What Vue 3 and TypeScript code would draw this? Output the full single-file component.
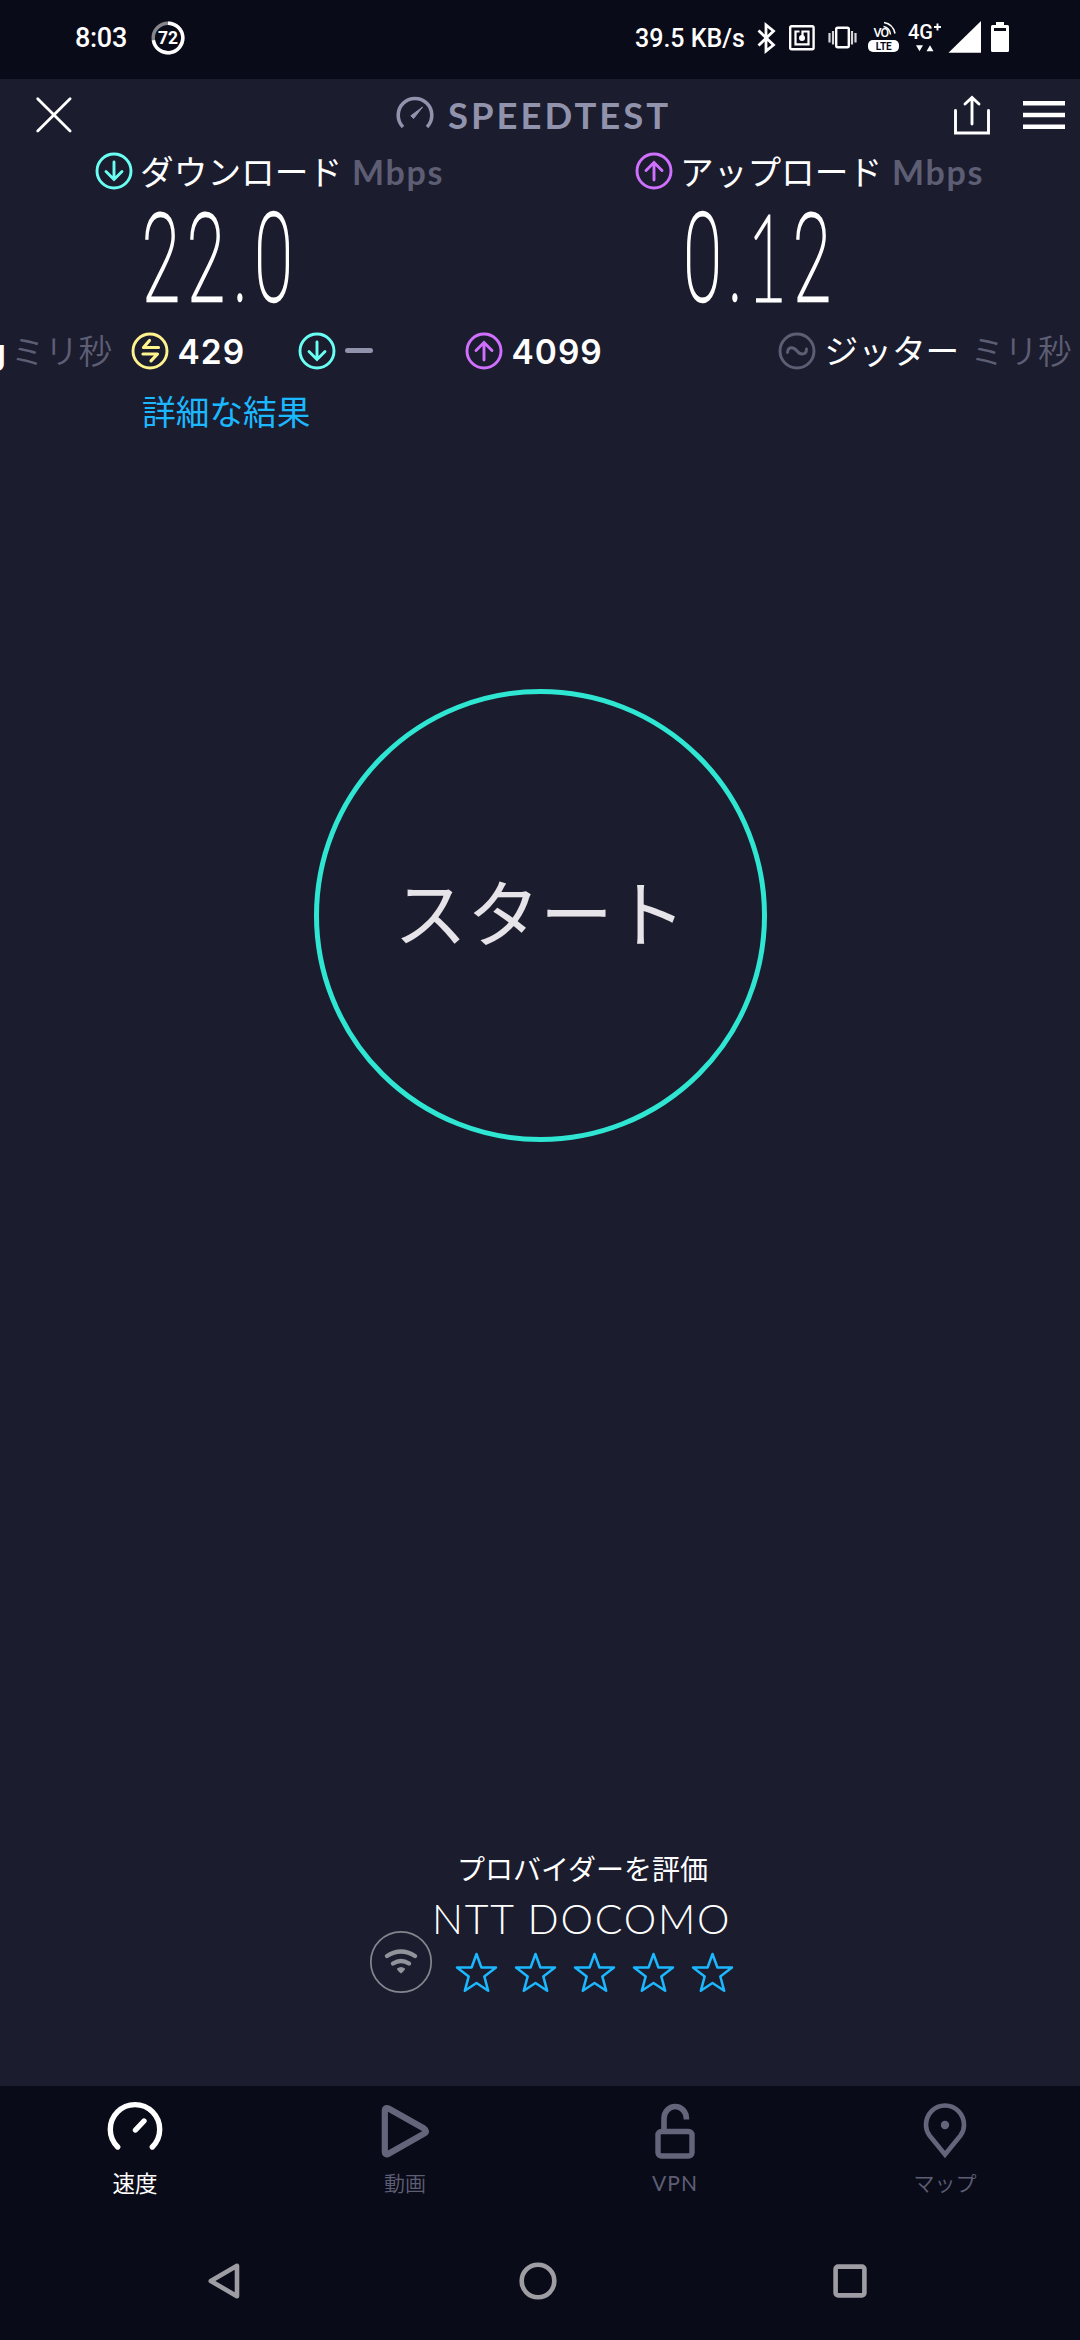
<script setup lang="ts">
interface Reading {
  key: string
  label: string
  glyphs: { char: string; x: number }[]
  arrow: string
}

const DOWN = 'M19 10v17M11 19.5l8 8 8-8'
const UP = 'M19 28V11M11 18.5l8-8 8 8'

const readings: Reading[] = [
  {
    key: 'download',
    label: 'ダウンロード',
    glyphs: [{ char: '2', x: 17 }, { char: '2', x: 62 }, { char: '.', x: 96.5 }, { char: '0', x: 129.5 }],
    arrow: DOWN,
  },
  {
    key: 'upload',
    label: 'アップロード',
    glyphs: [{ char: '0', x: 18.5 }, { char: '.', x: 51.5 }, { char: '1', x: 83 }, { char: '2', x: 128 }],
    arrow: UP,
  },
]

const stars = [1, 2, 3, 4, 5]
</script>

<template>
  <div class="screen">
    <header class="status">
      <span class="clock">8:03</span>
      <svg class="badge" width="34" height="34" viewBox="0 0 34 34">
        <circle cx="17" cy="17" r="14.8" fill="none" stroke="#85858c" stroke-width="3.4" />
        <path d="M17 2.2A14.8 14.8 0 1 1 2.4 19.2" fill="none" stroke="#fff" stroke-width="3.4" />
        <text x="17" y="23" text-anchor="middle" class="badge-text">72</text>
      </svg>
      <span class="rate">39.5 KB/s</span>
      <svg class="tray" width="256" height="40" viewBox="756 18 256 40" fill="none" stroke="#fff">
        <path d="M758.5 30.5l15 14.5-7.5 6V25l7.5 6-15 14.5" stroke-width="2.8" />
        <g stroke-width="2.4">
          <rect x="790.2" y="26.2" width="23.4" height="23" rx="1.5" />
          <path d="M799.5 31.5h-4v12.800h13V31.500h-6v6" stroke-width="2.200" />
          <circle cx="802" cy="38" r="1.800" fill="#fff" />
        </g>
        <rect x="836.200" y="27.800" width="12.600" height="19.500" rx="1.500" stroke-width="2.400" />
        <path d="M829.500 33v9.500M833 31v13.500M852 31v13.500M855.500 33v9.500" stroke="#d5d5da" stroke-width="2.200" />
        <g stroke="none" fill="#fff">
          <rect x="868" y="40" width="31" height="12" rx="5" />
          <text x="883.700" y="49.700" text-anchor="middle" class="lte">LTE</text>
          <text x="873.500" y="37" class="vo">VO</text>
          <text x="908" y="39" class="net">4G</text>
          <path d="M916 45.200h7l-3.500 6zM926.500 51.200h7l-3.500-6z" />
          <path d="M981 21v31.700h-32.500z" />
          <path d="M996 22h8v3h3.500q1.500 0 1.500 1.500V50.500q0 1.500-1.500 1.500h-15q-1.500 0-1.500-1.500V26.500q0-1.500 1.500-1.500h3.500z" />
        </g>
        <path d="M994 29.500h12" stroke="#0a0b18" stroke-width="3" />
        <path d="M937.500 23.500v7M934 27h7" stroke-width="1.900" />
        <path d="M883.500 26.500q6 1 7 8M884 22.500q9 1.500 11 11" stroke-width="1.600" />
      </svg>
    </header>

    <main class="body">
      <div class="topbar">
        <svg class="close" width="38" height="38" viewBox="0 0 38 38" stroke="#fff" stroke-width="2.800" stroke-linecap="round">
          <path d="M2.700 2.700l32.400 32.400M35.100 2.700L2.700 35.100" />
        </svg>
        <svg class="logo" width="40" height="34" viewBox="0 0 40 34">
          <path d="M8 31A16.800 16.800 0 1 1 32 31" fill="none" stroke="#9192ab" stroke-width="3.600" />
          <path d="M27.600 11L18.600 22.500L15.800 19.800z" fill="#9192ab" stroke="#9192ab" stroke-width="1" />
        </svg>
        <h1 class="brand">SPEEDTEST</h1>
        <svg class="share" width="38" height="40" viewBox="0 0 38 40" fill="none" stroke="#fff" stroke-width="2.900" stroke-linecap="round">
          <path d="M2.500 15.500V38h33V15.500" />
          <path d="M19 29V3M12 9l7-6.500L26 9" />
        </svg>
        <svg class="menu" width="42" height="30" viewBox="0 0 42 30" stroke="#fff" stroke-width="4.400">
          <path d="M0 3.300h42M0 15h42M0 26.700h42" />
        </svg>
      </div>

      <section class="readings">
        <div v-for="r in readings" :key="r.key" class="reading">
          <div class="reading-head">
            <svg class="ring" :class="r.key" width="38" height="38" viewBox="0 0 38 38">
              <circle cx="19" cy="19" r="17" />
              <path :d="r.arrow" />
            </svg>
            <span class="reading-label">{{ r.label }}</span>
            <span class="unit">Mbps</span>
          </div>
          <svg class="digits" width="160" height="102" viewBox="0 0 160 102">
            <g transform="scale(0.57 1)">
              <text
                v-for="(g, i) in r.glyphs"
                :key="i"
                :x="g.x / 0.57"
                y="95"
                text-anchor="middle"
                :class="{ one: g.char === '1' }"
              >{{ g.char }}</text>
            </g>
          </svg>
        </div>
      </section>

      <section class="latency">
        <span class="ping-name">Ping</span>
        <span class="ms">ミリ秒</span>
        <svg class="ring idle" width="38" height="38" viewBox="0 0 38 38">
          <circle cx="19" cy="19" r="17" />
          <path d="M18.500 8.500L12.500 15.500H27.500M12 22H26.500L20 28.800" stroke-width="3.200" stroke-linejoin="round" />
        </svg>
        <b class="value v1">429</b>
        <svg class="ring download" width="38" height="38" viewBox="0 0 38 38">
          <circle cx="19" cy="19" r="17" />
          <path :d="DOWN" />
        </svg>
        <i class="dash"></i>
        <svg class="ring upload" width="38" height="38" viewBox="0 0 38 38">
          <circle cx="19" cy="19" r="17" />
          <path :d="UP" />
        </svg>
        <b class="value v2">4099</b>
        <svg class="ring jitter" width="38" height="38" viewBox="0 0 38 38">
          <circle cx="19" cy="19" r="17" />
          <path d="M9.500 20.500C10 14.500 15.500 14.500 19 19S28.500 23 28.500 17" />
        </svg>
        <span class="jitter-label">ジッター</span>
        <span class="ms">ミリ秒</span>
      </section>

      <a class="details">詳細な結果</a>

      <button class="go">スタート</button>

      <section class="provider">
        <p class="rate-title">プロバイダーを評価</p>
        <p class="isp">NTT DOCOMO</p>
        <div class="rating">
          <svg class="wifi" width="64" height="64" viewBox="0 0 64 64">
            <circle cx="32" cy="32" r="30.200" fill="none" stroke="#85858f" stroke-width="1.700" />
            <path d="M18 26Q32 17 46 26M24 33.500Q32 28.500 40 33.500" fill="none" stroke="#92929b" stroke-width="4.400" stroke-linecap="round" />
            <path d="M28 38.500Q32 35.500 36 38.500Q36.300 40 32 43.500Q27.700 40 28 38.500z" fill="#92929b" />
          </svg>
          <div class="stars">
            <svg v-for="s in stars" :key="s" width="43" height="41" viewBox="0 0 43 41">
              <path d="M21.500 2L26.400 15.500H41L29.300 24.400L33.200 38.800L21.500 31L9.800 38.800L13.700 24.400L2 15.500H16.600z" />
            </svg>
          </div>
        </div>
      </section>
    </main>

    <nav class="tabs">
      <div class="tab active">
        <svg width="60" height="60" viewBox="0 0 60 60">
          <path d="M12.700 48A24.700 24.700 0 1 1 47.300 48M30.500 31L39 22" stroke-width="5.400" />
        </svg>
        <span>速度</span>
      </div>
      <div class="tab">
        <svg width="60" height="60" viewBox="0 0 60 60">
          <path d="M9.800 12Q9.800 7.500 14 9.700L49 29.500Q53 32.200 49 34.700L14 54.500Q9.800 56.800 9.800 52.300z" stroke-width="6.200" />
        </svg>
        <span>動画</span>
      </div>
      <div class="tab">
        <svg width="60" height="60" viewBox="0 0 60 60">
          <rect x="13" y="32.500" width="34" height="24.500" rx="3.500" stroke-width="5.400" />
          <path d="M19 32V19.500A11.200 12 0 0 1 41.400 19.500V20.500" stroke-width="5.600" stroke-linecap="butt" />
        </svg>
        <span class="latin">VPN</span>
      </div>
      <div class="tab">
        <svg width="60" height="60" viewBox="0 0 60 60">
          <path d="M30 55.500L14.500 36.500C11 32 11 29 11 26A19 19.500 0 0 1 49 26C49 29 49 32 45.500 36.500z" stroke-width="4.600" stroke-linejoin="miter" />
          <circle cx="30" cy="26" r="4.200" class="dot" />
        </svg>
        <span>マップ</span>
      </div>
    </nav>

    <footer class="system">
      <svg class="back" width="32" height="36" viewBox="0 0 32 36"><path d="M29 2.800V33.200L2.800 18z" /></svg>
      <svg class="home" width="38" height="38" viewBox="0 0 38 38"><circle cx="19" cy="19" r="16.300" /></svg>
      <svg class="recent" width="34" height="34" viewBox="0 0 34 34"><rect x="2.600" y="2.600" width="28.800" height="28.800" rx="2.500" /></svg>
    </footer>
  </div>
</template>

<style>
body {
  background: #1b1c2e;
}
</style>

<style scoped>
.screen {
  width: 1080px;
  height: 2340px;
  display: flex;
  flex-direction: column;
  overflow: hidden;
  background: #1b1c2e;
  color: #fff;
  font-family: Lato, "Noto Sans CJK JP", sans-serif;
}
svg {
  display: block;
  flex: none;
}
span, b, p, h1 {
  white-space: nowrap;
}
.status {
  height: 79px;
  flex: none;
  display: flex;
  align-items: center;
  box-sizing: border-box;
  padding-bottom: 3px;
  background: #0a0b18;
  font-family: Roboto, sans-serif;
  font-weight: 500;
}
.clock {
  margin-left: 75px;
  width: 76px;
  font-size: 27px;
  line-height: 34px;
  letter-spacing: -0.3px;
}
.rate {
  margin-left: 450px;
  width: 121px;
  font-size: 25px;
}
.badge-text {
  font: 700 17.5px Roboto, sans-serif;
  fill: #fff;
}
.lte {
  font: 700 10px Roboto, sans-serif;
  fill: #0a0b18;
}
.vo {
  font: 500 12.5px Roboto, sans-serif;
  letter-spacing: -1px;
}
.net {
  font: 500 20px Roboto, sans-serif;
}
.body {
  height: 2007px;
  flex: none;
}
.topbar {
  height: 72px;
  display: flex;
  align-items: center;
}
.close {
  margin-left: 35px;
}
.logo {
  margin-left: 322px;
  margin-bottom: 4px;
}
.brand {
  margin: 0 0 0 13px;
  width: 503px;
  font-size: 36.5px;
  font-weight: 700;
  line-height: 44px;
  letter-spacing: 3px;
  color: #9192ab;
}
.share {
  margin-left: 2px;
}
.menu {
  margin-left: 32px;
}
.readings {
  height: 162px;
  display: flex;
}
.reading {
  width: 540px;
}
.reading-head {
  height: 39px;
  display: flex;
  align-items: center;
  padding-left: 95px;
}
.ring {
  fill: none;
  stroke-width: 2.9;
  stroke-linecap: round;
}
.download {
  stroke: #6afff3;
}
.upload {
  stroke: #d070ff;
}
.idle {
  stroke: #fff38e;
}
.jitter {
  stroke: #5d5e74;
  margin-left: 174px;
}
.reading-label, .jitter-label, .ms, .details {
  font-family: "Noto Sans CJK JP", sans-serif;
  font-size: 33.7px;
  line-height: 40px;
}
.reading-label {
  margin: 1px 0 0 7px;
  width: 212px;
}
.unit {
  margin-top: 3px;
  font-size: 34px;
  line-height: 40px;
  font-weight: 700;
  letter-spacing: 1.7px;
  color: #5d5e74;
}
.digits {
  margin: 16px 0 0 144px;
  overflow: visible;
}
.digits text {
  font-family: Roboto, sans-serif;
  font-weight: 100;
  font-size: 122px;
  fill: #fff;
  stroke: #fff;
  stroke-width: 2px;
  vector-effect: non-scaling-stroke;
}
.digits .one {
  font-family: Lato, sans-serif;
  font-size: 120px;
  stroke-width: 2.6px;
}
.latency {
  height: 76px;
  display: flex;
  align-items: center;
}
.latency > * {
  flex: none;
}
.ping-name {
  width: 6px;
  display: flex;
  justify-content: flex-end;
  font-family: Inter, sans-serif;
  font-size: 34px;
  font-weight: 600;
}
.ms {
  margin: 0 0 2px 5px;
  width: 119.5px;
  font-weight: 350;
  color: #5d5e74;
}
.value {
  font-family: Inter, sans-serif;
  font-size: 33.5px;
  line-height: 40px;
  font-weight: 600;
  letter-spacing: 1px;
}
.v1 {
  margin: 1px 0 0 9px;
  width: 120px;
}
.dash {
  width: 28px;
  height: 5px;
  margin: 0 92px 2px 9px;
  border-radius: 2.5px;
  background: #9192ab;
}
.v2 {
  margin: 1px 0 0 9px;
  width: 92px;
}
.jitter-label {
  margin: 0 0 2px 9px;
  width: 141px;
}
.details {
  display: block;
  width: 200px;
  margin: 2px 0 0 142px;
  color: #1bb8ff;
}
.go {
  display: flex;
  align-items: center;
  justify-content: center;
  box-sizing: border-box;
  width: 453px;
  height: 453px;
  margin: 258px auto 0;
  padding: 0 0 14px;
  border: 5px solid #2ee6d2;
  border-radius: 50%;
  background: none;
  color: #e6e4e8;
  font-family: "Noto Sans CJK JP", sans-serif;
  font-size: 73px;
}
.provider {
  margin: 705px 0 0 369px;
}
.provider p {
  margin: 0;
}
.rate-title {
  padding-left: 88px;
  font-size: 28px;
  line-height: 44px;
}
.provider .isp {
  margin-top: 16px;
  padding-left: 63px;
  font-size: 41px;
  font-weight: 300;
  line-height: 24px;
  letter-spacing: 1.8px;
}
.rating {
  display: flex;
  margin-top: -1px;
}
.stars {
  display: flex;
  gap: 16px;
  margin: 22px 0 0 22px;
}
.stars path {
  fill: none;
  stroke: #1bb8ff;
  stroke-width: 2.5;
  stroke-linejoin: round;
}
.tabs {
  height: 134px;
  flex: none;
  display: flex;
  background: #0a0b18;
}
.tab {
  width: 270px;
  padding-top: 13px;
  display: flex;
  flex-direction: column;
  align-items: center;
  color: #5d5e74;
  font-family: "Noto Sans CJK JP", sans-serif;
  font-size: 21px;
  font-weight: 350;
  line-height: 30px;
}
.tab svg {
  fill: none;
  stroke: #64657a;
  stroke-linecap: round;
  margin-bottom: 8px;
}
.tab .dot {
  fill: #64657a;
  stroke: none;
}
.tab.active {
  color: #fff;
  font-size: 22.5px;
  font-weight: 400;
}
.tab.active svg {
  stroke: #fff;
}
.tab .latin {
  font-family: Lato, sans-serif;
  font-weight: 400;
  letter-spacing: 1px;
  padding-top: 1px;
}
.system {
  height: 120px;
  flex: none;
  box-sizing: border-box;
  display: flex;
  align-items: center;
  padding-top: 1px;
  background: #0a0b18;
}
.system svg {
  fill: none;
  stroke: #9d9da3;
  stroke-width: 4.6;
  stroke-linejoin: round;
}
.back {
  margin-left: 208px;
}
.home {
  margin-left: 278.5px;
}
.recent {
  margin-left: 276px;
}
</style>
